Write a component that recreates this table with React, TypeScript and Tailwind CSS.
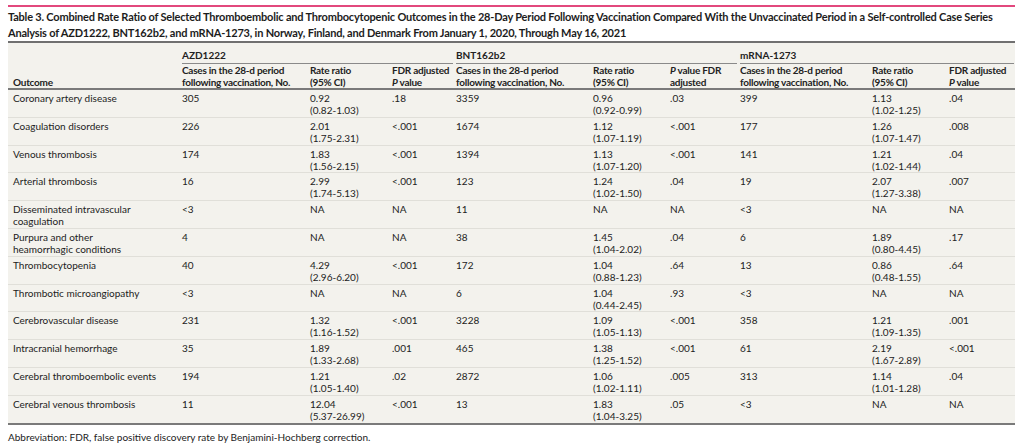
import React from 'react';

type Row = {
  outcome: string[];
  azd: [string, string, string, string];
  bnt: [string, string, string, string];
  mrna: [string, string, string, string];
};

const rows: Row[] = [
  { outcome: ['Coronary artery disease'], azd: ['305', '0.92', '(0.82-1.03)', '.18'], bnt: ['3359', '0.96', '(0.92-0.99)', '.03'], mrna: ['399', '1.13', '(1.02-1.25)', '.04'] },
  { outcome: ['Coagulation disorders'], azd: ['226', '2.01', '(1.75-2.31)', '<.001'], bnt: ['1674', '1.12', '(1.07-1.19)', '<.001'], mrna: ['177', '1.26', '(1.07-1.47)', '.008'] },
  { outcome: ['Venous thrombosis'], azd: ['174', '1.83', '(1.56-2.15)', '<.001'], bnt: ['1394', '1.13', '(1.07-1.20)', '<.001'], mrna: ['141', '1.21', '(1.02-1.44)', '.04'] },
  { outcome: ['Arterial thrombosis'], azd: ['16', '2.99', '(1.74-5.13)', '<.001'], bnt: ['123', '1.24', '(1.02-1.50)', '.04'], mrna: ['19', '2.07', '(1.27-3.38)', '.007'] },
  { outcome: ['Disseminated intravascular', 'coagulation'], azd: ['<3', 'NA', '', 'NA'], bnt: ['11', 'NA', '', 'NA'], mrna: ['<3', 'NA', '', 'NA'] },
  { outcome: ['Purpura and other', 'heamorrhagic conditions'], azd: ['4', 'NA', '', 'NA'], bnt: ['38', '1.45', '(1.04-2.02)', '.04'], mrna: ['6', '1.89', '(0.80-4.45)', '.17'] },
  { outcome: ['Thrombocytopenia'], azd: ['40', '4.29', '(2.96-6.20)', '<.001'], bnt: ['172', '1.04', '(0.88-1.23)', '.64'], mrna: ['13', '0.86', '(0.48-1.55)', '.64'] },
  { outcome: ['Thrombotic microangiopathy'], azd: ['<3', 'NA', '', 'NA'], bnt: ['6', '1.04', '(0.44-2.45)', '.93'], mrna: ['<3', 'NA', '', 'NA'] },
  { outcome: ['Cerebrovascular disease'], azd: ['231', '1.32', '(1.16-1.52)', '<.001'], bnt: ['3228', '1.09', '(1.05-1.13)', '<.001'], mrna: ['358', '1.21', '(1.09-1.35)', '.001'] },
  { outcome: ['Intracranial hemorrhage'], azd: ['35', '1.89', '(1.33-2.68)', '.001'], bnt: ['465', '1.38', '(1.25-1.52)', '<.001'], mrna: ['61', '2.19', '(1.67-2.89)', '<.001'] },
  { outcome: ['Cerebral thromboembolic events'], azd: ['194', '1.21', '(1.05-1.40)', '.02'], bnt: ['2872', '1.06', '(1.02-1.11)', '.005'], mrna: ['313', '1.14', '(1.01-1.28)', '.04'] },
  { outcome: ['Cerebral venous thrombosis'], azd: ['11', '12.04', '(5.37-26.99)', '<.001'], bnt: ['13', '1.83', '(1.04-3.25)', '.05'], mrna: ['<3', 'NA', '', 'NA'] },
];

const cell = 'pl-[5px] pr-0 pt-[2px] pb-[0.8px] align-top text-left font-normal';
const head = 'pl-[5px] pr-0 align-top text-left font-bold whitespace-nowrap tracking-[-0.25px]';

function Lines({ lines }: { lines: string[] }) {
  return (
    <>
      {lines.map((l, i) => (
        <div key={i}>{l}</div>
      ))}
    </>
  );
}

function GroupCells({ v }: { v: [string, string, string, string] }) {
  return (
    <>
      <td className={cell}>{v[0]}</td>
      <td className={cell}>
        <Lines lines={v[2] ? [v[1], v[2]] : [v[1]]} />
      </td>
      <td className={cell}>{v[3]}</td>
    </>
  );
}

function SubHead() {
  return (
    <>
      <th className={head}>
        <div>Cases in the 28-d period</div>
        <div>following vaccination, No.</div>
      </th>
      <th className={head}>
        <div>Rate ratio</div>
        <div>(95% CI)</div>
      </th>
    </>
  );
}

function FdrHead() {
  return (
    <th className={head}>
      <div>FDR adjusted</div>
      <div>
        <i>P</i> value
      </div>
    </th>
  );
}

export default function App() {
  return (
    <div className="bg-white w-[1024px] h-[448px] overflow-hidden font-[Lato,sans-serif] text-[#222]">
      <div className="pt-[5px] px-[8px] w-[1023px]">
        <div className="h-[2px] bg-[#e2487d]" />
        <h1 className="pt-[2px] pb-[1px] text-[11px] leading-[15.5px] font-bold tracking-[-0.2px] text-[#1c1c1c]">
          Table 3. Combined Rate Ratio of Selected Thromboembolic and Thrombocytopenic Outcomes in the 28-Day Period Following Vaccination Compared With the Unvaccinated Period in a Self-controlled Case Series Analysis of AZD1222, BNT162b2, and mRNA-1273, in Norway, Finland, and Denmark From January 1, 2020, Through May 16, 2021
        </h1>
        <table className="w-[1007px] table-fixed border-collapse bg-[#f3f2ed] text-[10px] leading-[12px] border-t-2 border-t-[#707070] border-b-2 border-b-[#7a7a7a]">
          <colgroup>
            <col className="w-[169px]" />
            <col className="w-[128px]" />
            <col className="w-[82px]" />
            <col className="w-[64px]" />
            <col className="w-[137px]" />
            <col className="w-[77px]" />
            <col className="w-[70px]" />
            <col className="w-[132px]" />
            <col className="w-[77px]" />
            <col className="w-[71px]" />
          </colgroup>
          <thead>
            <tr>
              <th rowSpan={2} className="pl-[5px] align-bottom text-left font-bold tracking-[-0.25px] border-b-2 border-b-[#7a7a7a]">
                Outcome
              </th>
              {['AZD1222', 'BNT162b2', 'mRNA-1273'].map((g, i) => (
                <th key={g} colSpan={3} className={'pl-[5px] pt-[6px] text-left font-bold ' + (i === 2 ? 'pr-[1px]' : 'pr-0')}>
                  <div className={'pb-[2px] border-b border-b-[#8a8a8a] ' + (i === 2 ? '' : 'mr-[-2px]')}>{g}</div>
                </th>
              ))}
            </tr>
            <tr className="border-b-2 border-b-[#7a7a7a]">
              <SubHead />
              <FdrHead />
              <SubHead />
              <th className={head}>
                <div>
                  <i>P</i> value FDR
                </div>
                <div>adjusted</div>
              </th>
              <SubHead />
              <FdrHead />
            </tr>
          </thead>
          <tbody>
            {rows.map((r, i) => (
              <tr key={i} className={i < rows.length - 1 ? 'border-b border-b-[#e0dfd9]' : ''}>
                <td className={cell}>
                  <Lines lines={r.outcome} />
                </td>
                <GroupCells v={r.azd} />
                <GroupCells v={r.bnt} />
                <GroupCells v={r.mrna} />
              </tr>
            ))}
          </tbody>
        </table>
        <p className="pt-[6px] text-[10px] leading-[12px] text-[#222]">
          Abbreviation: FDR, false positive discovery rate by Benjamini-Hochberg correction.
        </p>
      </div>
    </div>
  );
}
